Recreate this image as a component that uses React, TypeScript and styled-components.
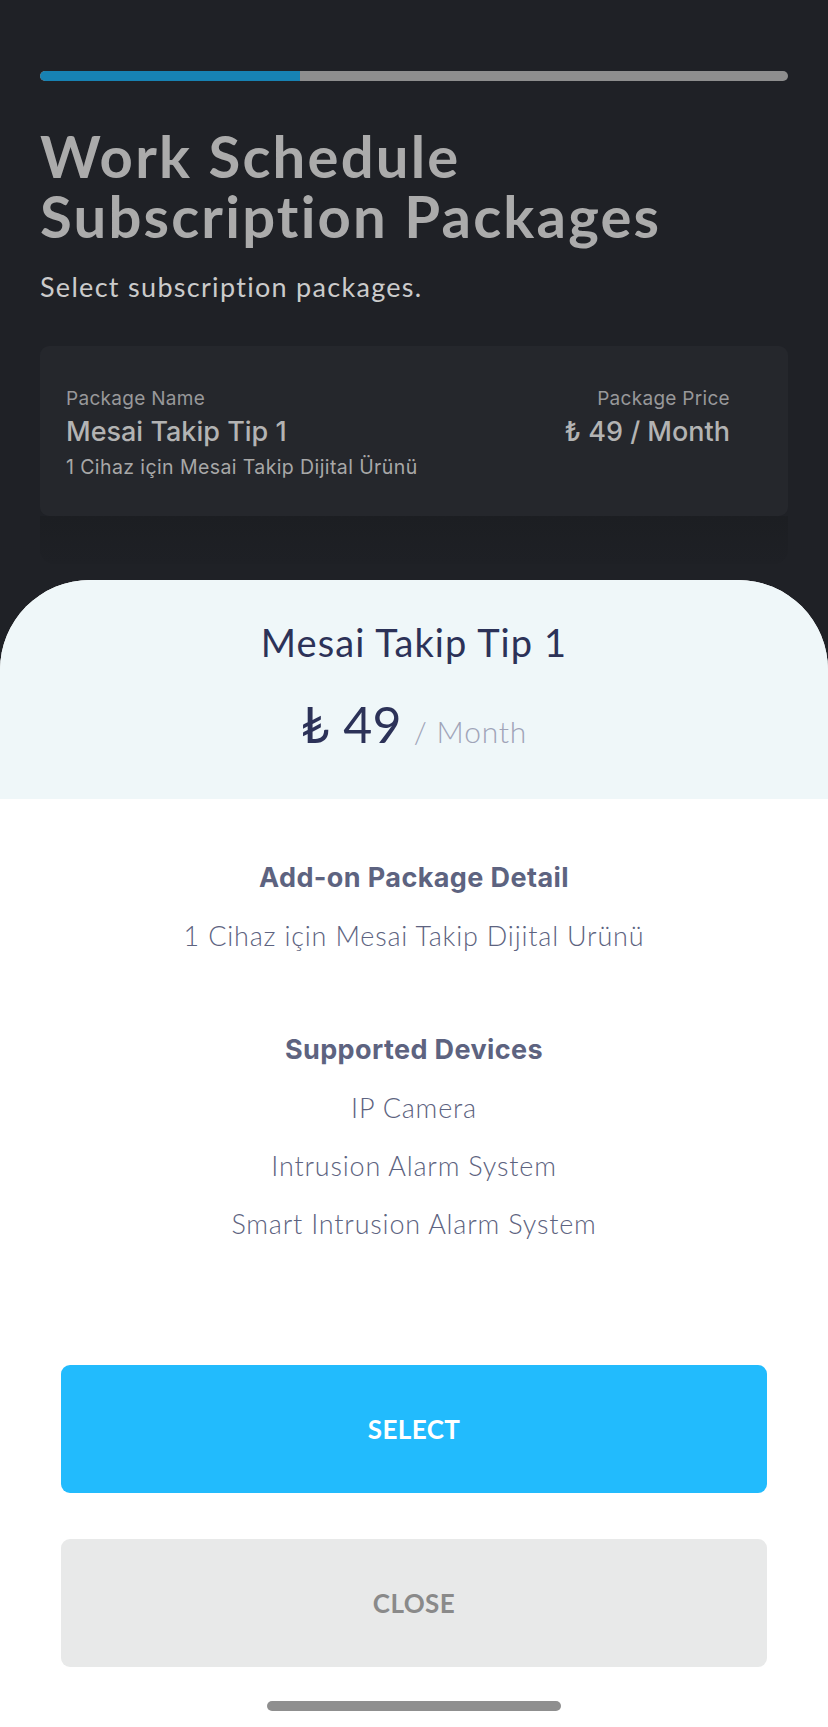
import styled, { createGlobalStyle } from "styled-components";

const GlobalStyle = createGlobalStyle`
  html, body {
    margin: 0;
    padding: 0;
    background: #1f2126;
  }
  * {
    box-sizing: border-box;
  }
`;

const devices = ["IP Camera", "Intrusion Alarm System", "Smart Intrusion Alarm System"];

const App = () => {
  const progress = 34.7;

  return (
    <>
      <GlobalStyle />
      <Page>
        <Backdrop>
          <Progress>
            <ProgressFill style={{ width: `${progress}%` }} />
          </Progress>
          <Title>
            <TitleLine>Work Schedule</TitleLine>
            <TitleLine>Subscription Packages</TitleLine>
          </Title>
          <Subtitle>Select subscription packages.</Subtitle>
          <Card>
            <CardColumn>
              <CardLabel>Package Name</CardLabel>
              <CardValue>Mesai Takip Tip 1</CardValue>
              <CardNote>1 Cihaz için Mesai Takip Dijital Ürünü</CardNote>
            </CardColumn>
            <CardColumn $right>
              <CardLabel>Package Price</CardLabel>
              <CardValue>₺ 49 / Month</CardValue>
            </CardColumn>
          </Card>
          <CardShade />
        </Backdrop>

        <Sheet>
          <SheetHead>
            <PackageName>Mesai Takip Tip 1</PackageName>
            <PriceRow>
              <Price>₺ 49</Price>
              <Period>/ Month</Period>
            </PriceRow>
          </SheetHead>

          <SheetBody>
            <Section>
              <SectionTitle>Add-on Package Detail</SectionTitle>
              <SectionText>1 Cihaz için Mesai Takip Dijital Urünü</SectionText>
            </Section>
            <Section $gapTop={82}>
              <SectionTitle>Supported Devices</SectionTitle>
              {devices.map((d) => (
                <SectionText key={d}>{d}</SectionText>
              ))}
            </Section>

            <Actions>
              <Button $primary>SELECT</Button>
              <Button>CLOSE</Button>
            </Actions>
            <HomeIndicator />
          </SheetBody>
        </Sheet>
      </Page>
    </>
  );
};

export default App;

const Page = styled.div`
  width: 828px;
  min-height: 1727px;
  background: #1f2126;
  display: flex;
  flex-direction: column;
  font-family: "Lato", "Inter", sans-serif;
  font-variant-ligatures: none;
`;

const Backdrop = styled.div`
  padding: 71px 40px 0;
  display: flex;
  flex-direction: column;
`;

const Progress = styled.div`
  height: 10px;
  border-radius: 5px;
  background: #8e8e8e;
  overflow: hidden;
`;

const ProgressFill = styled.div`
  height: 100%;
  background: #1782b3;
  border-radius: 5px 0 0 5px;
`;

const Title = styled.h1`
  margin: 45px 0 0;
  display: flex;
  flex-direction: column;
  font-family: "Lato", sans-serif;
  font-weight: 700;
  font-size: 58px;
  color: #ababab;
  letter-spacing: 2.2px;
`;

const TitleLine = styled.span`
  display: block;
  height: 60px;
  line-height: 60px;
`;

const Subtitle = styled.p`
  margin: 25px 0 0;
  font-family: "Lato", sans-serif;
  font-weight: 400;
  font-size: 27px;
  line-height: 32px;
  letter-spacing: 1.3px;
  color: #cbcbcb;
`;

const Card = styled.div`
  margin-top: 43px;
  height: 170px;
  padding: 41px 58px 0 26px;
  background: #25272c;
  border-radius: 9px;
  display: flex;
  justify-content: space-between;
  font-family: "Inter", sans-serif;
`;

const CardShade = styled.div`
  height: 48px;
  background: linear-gradient(#1c1e22, #1e2025);
  border-radius: 0 0 14px 14px;
`;

const CardColumn = styled.div<{ $right?: boolean }>`
  display: flex;
  flex-direction: column;
  align-items: ${(p) => (p.$right ? "flex-end" : "flex-start")};
`;

const CardLabel = styled.div`
  font-size: 19px;
  line-height: 24px;
  color: #98989a;
  letter-spacing: 0.3px;
`;

const CardValue = styled.div`
  margin-top: 4px;
  font-size: 27px;
  line-height: 34px;
  font-weight: 500;
  color: #b3b3b3;
`;

const CardNote = styled.div`
  margin-top: 6px;
  font-size: 19.5px;
  line-height: 24px;
  color: #a8a8a8;
  letter-spacing: 0.4px;
`;

const Sheet = styled.div`
  margin-top: 16px;
  flex: 1;
  display: flex;
  flex-direction: column;
  background: #ffffff;
  border-radius: 90px 90px 0 0;
  overflow: hidden;
`;

const SheetHead = styled.div`
  height: 219px;
  padding-top: 40px;
  background: #eff7f9;
  display: flex;
  flex-direction: column;
  align-items: center;
`;

const PackageName = styled.div`
  font-size: 38px;
  line-height: 44px;
  letter-spacing: 1.1px;
  color: #2c3258;
`;

const PriceRow = styled.div`
  margin-top: 30px;
  display: flex;
  align-items: baseline;
  gap: 12px;
`;

const Price = styled.span`
  font-size: 50px;
  line-height: 60px;
  font-weight: 400;
  letter-spacing: 0.3px;
  color: #2c3258;
`;

const Period = styled.span`
  font-size: 30px;
  line-height: 36px;
  font-weight: 300;
  letter-spacing: 0.8px;
  color: #a0a4b8;
`;

const SheetBody = styled.div`
  flex: 1;
  padding: 63px 61px 16px;
  display: flex;
  flex-direction: column;
  align-items: center;
`;

const Section = styled.div<{ $gapTop?: number }>`
  margin-top: ${(p) => p.$gapTop ?? 0}px;
  display: flex;
  flex-direction: column;
  align-items: center;
  gap: 26px;
`;

const SectionTitle = styled.div`
  font-family: "Inter", sans-serif;
  font-weight: 700;
  font-size: 27px;
  line-height: 32px;
  letter-spacing: 0.4px;
  color: #5d6380;
`;

const SectionText = styled.div`
  font-weight: 300;
  font-size: 27px;
  line-height: 32px;
  letter-spacing: 0.8px;
  color: #5d6380;
`;

const Actions = styled.div`
  margin-top: 125px;
  width: 100%;
  display: flex;
  flex-direction: column;
  gap: 46px;
`;

const Button = styled.button<{ $primary?: boolean }>`
  height: 128px;
  width: 100%;
  border: none;
  border-radius: 9px;
  background: ${(p) => (p.$primary ? "#22bbfd" : "#e8e9e9")};
  color: ${(p) => (p.$primary ? "#ffffff" : "#8a8a8a")};
  font-family: "Lato", sans-serif;
  font-weight: 700;
  font-size: 26px;
  letter-spacing: 0.4px;
  cursor: pointer;
`;

const HomeIndicator = styled.div`
  margin-top: 34px;
  width: 294px;
  height: 10px;
  border-radius: 5px;
  background: #8f8f8f;
`;
